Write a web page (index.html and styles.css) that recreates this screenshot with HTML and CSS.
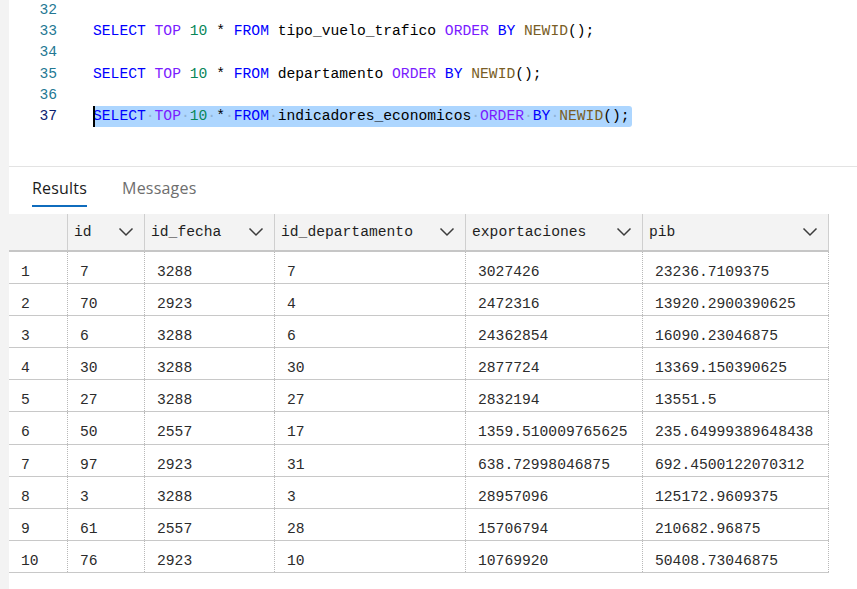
FILE: index.html
```
<!DOCTYPE html>
<html>
<head>
<meta charset="utf-8">
<link rel="stylesheet" href="styles.css">
</head>
<body>
<div class="app">
  <div class="strip"></div>
  <div class="main">
    <div class="editor">
      <div class="lines">
        <div class="line"><span class="ln">32</span><span class="code"></span></div>
        <div class="line"><span class="ln">33</span><span class="code"><span class="kw">SELECT</span> <span class="kw2">TOP</span> <span class="num">10</span> * <span class="kw">FROM</span> tipo_vuelo_trafico <span class="kw2">ORDER</span> <span class="kw">BY</span> <span class="fn">NEWID</span>();</span></div>
        <div class="line"><span class="ln">34</span><span class="code"></span></div>
        <div class="line"><span class="ln">35</span><span class="code"><span class="kw">SELECT</span> <span class="kw2">TOP</span> <span class="num">10</span> * <span class="kw">FROM</span> departamento <span class="kw2">ORDER</span> <span class="kw">BY</span> <span class="fn">NEWID</span>();</span></div>
        <div class="line"><span class="ln">36</span><span class="code"></span></div>
        <div class="line"><span class="ln ln-active">37</span><span class="code"><span class="sel"><span class="kw">SELECT</span><span class="ws">·</span><span class="kw2">TOP</span><span class="ws">·</span><span class="num">10</span><span class="ws">·</span>*<span class="ws">·</span><span class="kw">FROM</span><span class="ws">·</span>indicadores_economicos<span class="ws">·</span><span class="kw2">ORDER</span><span class="ws">·</span><span class="kw">BY</span><span class="ws">·</span><span class="fn">NEWID</span>();</span></span></div>
      </div>
    </div>
    <div class="tabs">
      <div class="tab tab-active">Results</div>
      <div class="tab">Messages</div>
    </div>
    <div class="grid">
      <div class="row head">
        <div class="hc"></div>
        <div class="hc"><span>id</span><svg viewBox="0 0 16 10" width="16" height="10"><path d="M1.5 1.5 L8 8 L14.5 1.5"/></svg></div>
        <div class="hc"><span>id_fecha</span><svg viewBox="0 0 16 10" width="16" height="10"><path d="M1.5 1.5 L8 8 L14.5 1.5"/></svg></div>
        <div class="hc"><span>id_departamento</span><svg viewBox="0 0 16 10" width="16" height="10"><path d="M1.5 1.5 L8 8 L14.5 1.5"/></svg></div>
        <div class="hc"><span>exportaciones</span><svg viewBox="0 0 16 10" width="16" height="10"><path d="M1.5 1.5 L8 8 L14.5 1.5"/></svg></div>
        <div class="hc"><span>pib</span><svg viewBox="0 0 16 10" width="16" height="10"><path d="M1.5 1.5 L8 8 L14.5 1.5"/></svg></div>
      </div>
      <div class="row"><div class="c">1</div><div class="c">7</div><div class="c">3288</div><div class="c">7</div><div class="c">3027426</div><div class="c">23236.7109375</div></div>
      <div class="row"><div class="c">2</div><div class="c">70</div><div class="c">2923</div><div class="c">4</div><div class="c">2472316</div><div class="c">13920.2900390625</div></div>
      <div class="row"><div class="c">3</div><div class="c">6</div><div class="c">3288</div><div class="c">6</div><div class="c">24362854</div><div class="c">16090.23046875</div></div>
      <div class="row"><div class="c">4</div><div class="c">30</div><div class="c">3288</div><div class="c">30</div><div class="c">2877724</div><div class="c">13369.150390625</div></div>
      <div class="row"><div class="c">5</div><div class="c">27</div><div class="c">3288</div><div class="c">27</div><div class="c">2832194</div><div class="c">13551.5</div></div>
      <div class="row"><div class="c">6</div><div class="c">50</div><div class="c">2557</div><div class="c">17</div><div class="c">1359.510009765625</div><div class="c">235.64999389648438</div></div>
      <div class="row"><div class="c">7</div><div class="c">97</div><div class="c">2923</div><div class="c">31</div><div class="c">638.72998046875</div><div class="c">692.4500122070312</div></div>
      <div class="row"><div class="c">8</div><div class="c">3</div><div class="c">3288</div><div class="c">3</div><div class="c">28957096</div><div class="c">125172.9609375</div></div>
      <div class="row"><div class="c">9</div><div class="c">61</div><div class="c">2557</div><div class="c">28</div><div class="c">15706794</div><div class="c">210682.96875</div></div>
      <div class="row"><div class="c">10</div><div class="c">76</div><div class="c">2923</div><div class="c">10</div><div class="c">10769920</div><div class="c">50408.73046875</div></div>
    </div>
  </div>
</div>
</body>
</html>
```
FILE: styles.css
```
* { box-sizing: border-box; }
html, body { margin: 0; padding: 0; background: #fff; }
body { overflow: hidden; }

.app {
  display: flex;
  width: 857px;
  height: 589px;
}
.strip {
  width: 9px;
  flex: none;
  background: #f3f3f3;
}
.main {
  flex: 1;
  display: flex;
  flex-direction: column;
  min-width: 0;
}

/* editor */
.editor {
  height: 167px;
  border-bottom: 1px solid #e3e3e3;
  overflow: hidden;
  font-family: "Liberation Mono", monospace;
  font-size: 14.67px;
}
.lines { margin-top: 0; }
.line {
  display: flex;
  height: 21.2px;
  line-height: 21.2px;
  white-space: pre;
}
.ln {
  width: 48px;
  text-align: right;
  color: #237893;
  flex: none;
}
.ln-active { color: #0b216f; }
.code {
  margin-left: 36px;
  color: #000;
}
.kw { color: #0000ff; }
.kw2 { color: #7a1cff; }
.num { color: #098658; }
.fn { color: #795e26; }
.sel {
  position: relative;
  display: inline-block;
  background: #add6ff;
  border-radius: 3px;
  padding-right: 2px;
}
.sel::before {
  content: "";
  position: absolute;
  left: 0;
  top: 0;
  width: 2px;
  height: 100%;
  background: #000;
}
.ws { color: #8fb2d6; }

/* tabs */
.tabs {
  display: flex;
  gap: 35px;
  padding: 11px 0 0 23px;
  margin-bottom: 7px;
  font-family: "Open Sans", "Noto Sans", sans-serif;
  font-size: 16px;
  letter-spacing: 0.2px;
}
.tab {
  line-height: 21px;
  padding-bottom: 6px;
  border-bottom: 2px solid transparent;
  color: #6e6e6e;
}
.tab-active {
  color: #1b1b1b;
  border-bottom-color: #0f6cbd;
}

/* grid */
.grid {
  width: 820px;
  font-family: "Liberation Mono", monospace;
  font-size: 14.67px;
  color: #2b2b2b;
}
.row {
  display: grid;
  grid-template-columns: 59px 77px 130px 191px 177px 186px;
  height: 32.1px;
  border-bottom: 1px solid #c8c8c8;
}
.row.head {
  height: 38px;
  background: #f3f3f3;
  border-bottom: 2px solid #c6c6c6;
}
.hc {
  display: flex;
  align-items: center;
  justify-content: space-between;
  padding: 0 10px 0 6px;
  border-right: 1px solid #cfcfcf;
  color: #1e1e1e;
}
.hc svg {
  flex: none;
  fill: none;
  stroke: #3c3c3c;
  stroke-width: 1.5;
}
.c {
  padding: 12px 0 0 12px;
  line-height: 16px;
  border-right: 1px dotted #b8b8b8;
  white-space: nowrap;
}
```
